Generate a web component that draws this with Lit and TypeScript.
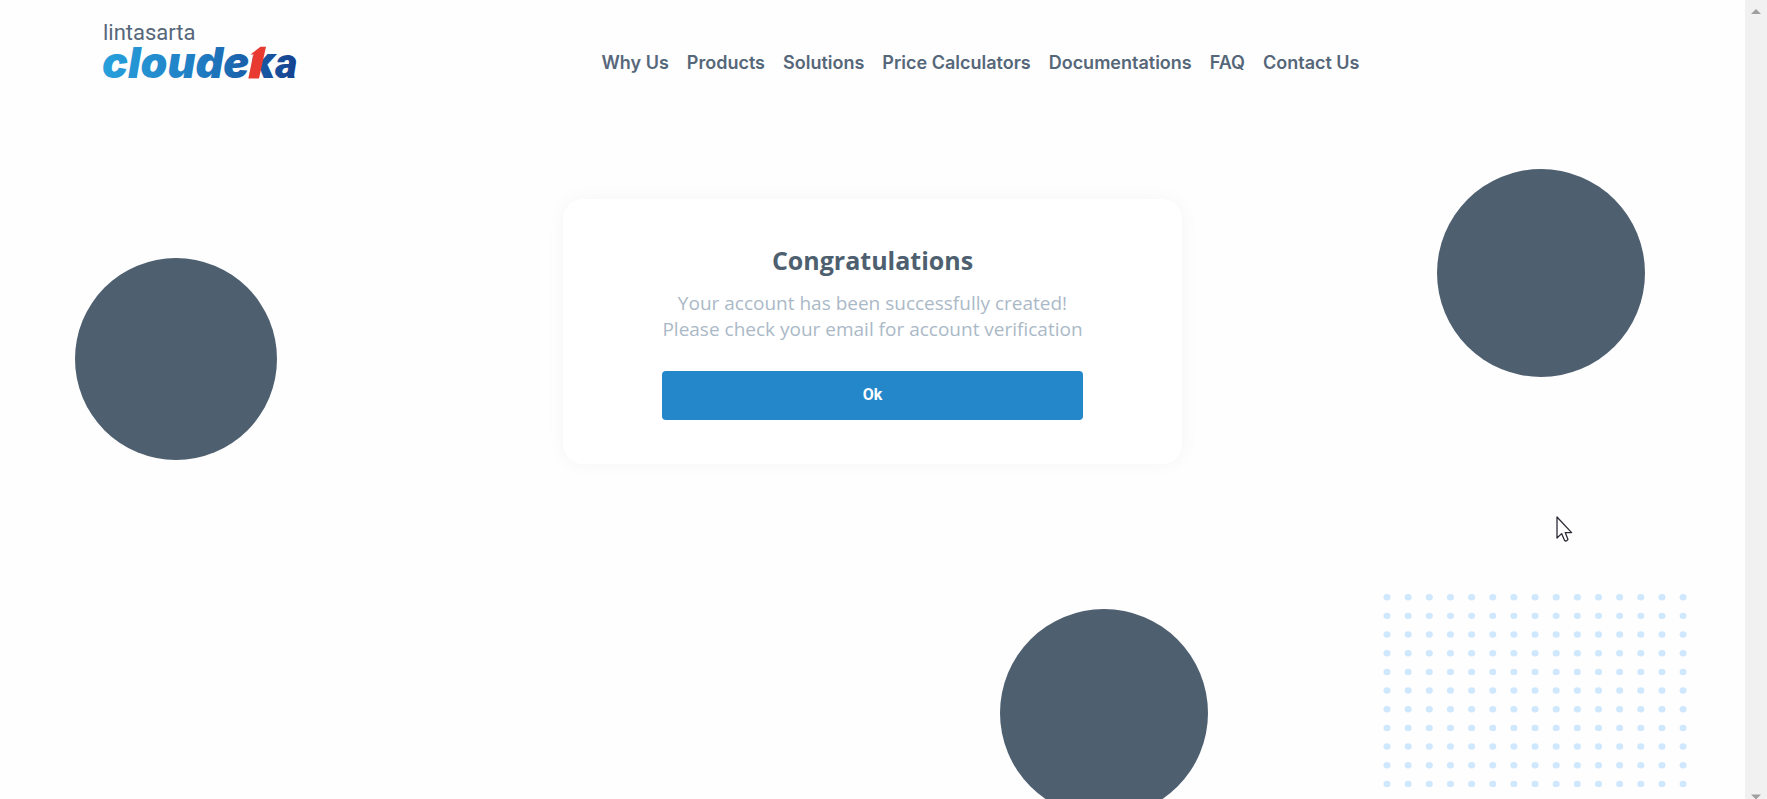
import { LitElement, html, svg, css } from "lit";
import { customElement } from "lit/decorators.js";

const LINKS = [
  "Why Us",
  "Products",
  "Solutions",
  "Price Calculators",
  "Documentations",
  "FAQ",
  "Contact Us",
];

@customElement("cloudeka-logo")
class CloudekaLogo extends LitElement {
  static styles = css`
    :host {
      display: block;
    }
    .logo {
      display: block;
      width: 200px;
      height: 66px;
      overflow: visible;
    }
    .parent {
      font: 400 22px "Roboto", sans-serif;
      fill: #56677a;
    }
    .brand {
      font: italic 900 43px "Inter", sans-serif;
      fill: url(#brand-blue);
    }
    .last {
      font: italic 900 43px "Roboto", sans-serif;
    }
  `;

  render() {
    return html`
      <svg class="logo" viewBox="0 0 200 66" role="img" aria-label="lintasarta cloudeka">
        <defs>
          <linearGradient id="brand-blue" gradientUnits="userSpaceOnUse" x1="0" y1="0" x2="194" y2="0">
            <stop offset="0" stop-color="#27a0dc" />
            <stop offset="0.5" stop-color="#1f7cc2" />
            <stop offset="1" stop-color="#15418f" />
          </linearGradient>
        </defs>
        <text class="parent" x="-1" y="23">lintasarta</text>
        <text class="brand" x="-2" y="61">cloudek<tspan class="last">a</tspan></text>
        <path d="M146 26 H161 L156 31 L149 39 Z" fill="#fefefe" />
        <path d="M146.5 37.5 L156.5 29.7 H162 L155 61.5 H144.3 L149.6 37.5 Z" fill="#e93a32" />
      </svg>
    `;
  }
}

@customElement("site-header")
class SiteHeader extends LitElement {
  static styles = css`
    .bar {
      display: flex;
      align-items: flex-start;
      padding: 17px 88px 0 104px;
    }
    .home {
      display: block;
    }
    .nav {
      flex: 1;
      display: flex;
      justify-content: center;
      gap: 18px;
      padding-top: 35px;
    }
    .link {
      color: #56677a;
      font: 600 18px/22px "Inter", sans-serif;
      text-decoration: none;
      white-space: nowrap;
    }
  `;

  render() {
    return html`
      <header class="bar">
        <a class="home" href="#" aria-label="Home"><cloudeka-logo></cloudeka-logo></a>
        <nav class="nav">
          ${LINKS.map((label) => html`<a class="link" href="#">${label}</a>`)}
        </nav>
      </header>
    `;
  }
}

@customElement("result-card")
class ResultCard extends LitElement {
  static styles = css`
    .card {
      box-sizing: border-box;
      padding: 44px 99px;
      border-radius: 20px;
      background: #ffffff;
      box-shadow: 0 0 20px rgba(0, 0, 0, 0.04);
      font-family: "Open Sans", sans-serif;
      text-align: center;
    }
    .title {
      margin: 0 0 13px;
      color: #4e5f70;
      font-size: 25px;
      font-weight: 700;
      line-height: 34px;
    }
    .message {
      margin: 0 0 29px;
      color: #abb9c7;
      font-size: 19px;
      line-height: 26px;
    }
    .ok {
      display: block;
      width: 100%;
      height: 49px;
      padding: 0 0 2px;
      border: 0;
      border-radius: 4px;
      background: #2387ca;
      color: #ffffff;
      font: 700 16px "Roboto", sans-serif;
      cursor: pointer;
    }
  `;

  render() {
    return html`
      <section class="card">
        <h1 class="title">Congratulations</h1>
        <p class="message">
          Your account has been successfully created!<br />Please check your email for account
          verification
        </p>
        <button class="ok" type="button">Ok</button>
      </section>
    `;
  }
}

@customElement("page-backdrop")
class PageBackdrop extends LitElement {
  static styles = css`
    :host {
      position: absolute;
      inset: 0;
      overflow: hidden;
      pointer-events: none;
    }
    .circle {
      position: absolute;
      width: 208px;
      height: 208px;
      border-radius: 50%;
      background: #4e5f70;
    }
    .left {
      top: 258px;
      left: 75px;
      width: 202px;
      height: 202px;
    }
    .right {
      top: 169px;
      right: 100px;
    }
    .bottom {
      top: 609px;
      left: calc(50% + 127px);
    }
    .dots {
      position: absolute;
      top: 593px;
      right: 58px;
      width: 304px;
      height: 210px;
    }
  `;

  render() {
    const dots = [];
    for (let row = 0; row < 11; row++) {
      for (let col = 0; col < 15; col++) {
        dots.push(
          svg`<ellipse cx=${4 + col * 21.15} cy=${4.2 + row * 18.67} rx="3.5" ry="3.2" fill="#cfe8fd" />`
        );
      }
    }
    return html`
      <div class="circle left"></div>
      <div class="circle right"></div>
      <div class="circle bottom"></div>
      <svg class="dots" viewBox="0 0 304 210" aria-hidden="true">${dots}</svg>
    `;
  }
}

@customElement("scroll-track")
class ScrollTrack extends LitElement {
  static styles = css`
    :host {
      display: flex;
      flex-direction: column;
      justify-content: space-between;
      align-items: center;
      box-sizing: border-box;
      width: 22px;
      padding-top: 9px;
      background: #f1f1f1;
    }
    .arrow {
      display: block;
      width: 10px;
      height: 5px;
    }
  `;

  render() {
    return html`
      <svg class="arrow" viewBox="0 0 10 5" aria-hidden="true"><path d="M0 5 L5 0 L10 5 Z" fill="#a0a0a0" /></svg>
      <svg class="arrow" viewBox="0 0 10 5" aria-hidden="true"><path d="M0 0.5 H10 L5.5 5 H4.5 Z" fill="#a0a0a0" /></svg>
    `;
  }
}

@customElement("app-root")
class AppRoot extends LitElement {
  static styles = css`
    :host {
      display: flex;
      height: 100vh;
      overflow: hidden;
      position: relative;
      background: #fefefe;
    }
    .page {
      flex: 1;
      position: relative;
      min-width: 0;
    }
    .content {
      position: relative;
      display: flex;
      flex-direction: column;
      align-items: center;
      gap: 116px;
    }
    .header {
      align-self: stretch;
    }
    .pointer {
      position: absolute;
      top: 516px;
      right: 194px;
      width: 17px;
      height: 27px;
    }
  `;

  render() {
    return html`
      <div class="page">
        <page-backdrop></page-backdrop>
        <div class="content">
          <site-header class="header"></site-header>
          <result-card></result-card>
        </div>
      </div>
      <scroll-track></scroll-track>
      <svg class="pointer" viewBox="0 0 17 27" aria-hidden="true">
        <path
          d="M1 1 V22 L5.6 17.6 L8.6 24.6 Q10.2 25.8 12 23.4 L9.2 16.6 H15.6 Z"
          fill="#ffffff"
          stroke="#2b2b38"
          stroke-width="1.3"
          stroke-linejoin="round"
        />
      </svg>
    `;
  }
}
